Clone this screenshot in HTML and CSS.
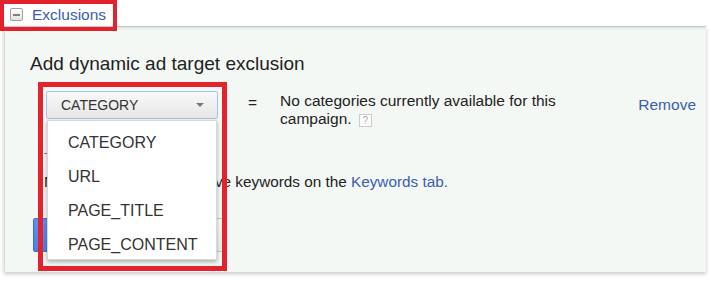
FILE: index.html
```html
<!DOCTYPE html>
<html lang="en">
<head>
  <meta charset="UTF-8">
  <meta name="viewport" content="width=device-width, initial-scale=1.0">
  <title>Exclusions</title>
  <link rel="stylesheet" href="styles.css">
</head>
<body>

  <div class="section-head">
    <span class="toggle-icon"><span class="toggle-bar"></span></span>
    <a class="section-link" href="#">Exclusions</a>
  </div>

  <div class="panel">
    <h2>Add dynamic ad target exclusion</h2>

    <div class="rule-row">
      <div class="select-wrap">
        <div class="select-btn">
          <span>CATEGORY</span>
          <span class="arrow"></span>
        </div>
        <ul class="select-menu">
          <li>CATEGORY</li>
          <li>URL</li>
          <li>PAGE_TITLE</li>
          <li>PAGE_CONTENT</li>
        </ul>
      </div>
      <span class="equals">=</span>
      <p class="rule-value">No categories currently available for this campaign. <span class="help">?</span></p>
      <a class="remove" href="#">Remove</a>
    </div>

    <a class="add-link" href="#">&ndash;</a>

    <p class="note">Note: You can add negative keywords on the <a href="#">Keywords tab.</a></p>

    <div class="actions">
      <button class="btn-save">Save</button>
      <button class="btn-cancel">Cancel</button>
    </div>
  </div>

  <!-- annotation boxes -->
  <div class="mark mark-head"></div>
  <div class="mark mark-menu"></div>

</body>
</html>
```

FILE: styles.css
```css
* {
  box-sizing: border-box;
  margin: 0;
  padding: 0;
}

body {
  position: relative;
  background-color: #fff;
  color: #222;
  font-family: "Liberation Sans", Arial, sans-serif;
  width: 709px;
  height: 285px;
  overflow: hidden;
}

a {
  color: #3a5db5;
  text-decoration: none;
}

.section-head {
  display: flex;
  align-items: center;
  height: 26px;
  padding-left: 10px;
  padding-top: 3px;
}

.toggle-icon {
  display: flex;
  align-items: center;
  justify-content: center;
  width: 13px;
  height: 13px;
  border: 1px solid #a0a0a0;
  border-radius: 2px;
  background: linear-gradient(#fdfdfd, #e2e2e2);
}

.toggle-bar {
  width: 7px;
  height: 2px;
  background-color: #808080;
}

.section-link {
  margin-left: 9px;
  font-size: 15.5px;
  color: #3c5cb8;
}

.panel {
  margin: 0 3px 0 4px;
  height: 246px;
  padding: 26px 10px 0 25px;
  background-color: #f4f8f4;
  border-top: 1px solid #c6c8c6;
  border-left: 1px solid #dcdedc;
  box-shadow: inset 0 3px 3px -2px rgba(0, 0, 0, 0.12), 0 2px 4px rgba(0, 0, 0, 0.22);
}

.panel h2 {
  font-size: 19px;
  font-weight: normal;
  line-height: 22px;
  color: #222;
}

.rule-row {
  display: flex;
  align-items: flex-start;
  margin-top: 16px;
  font-size: 15.5px;
}

.select-wrap {
  position: relative;
  margin-left: 16px;
}

.select-btn {
  display: flex;
  align-items: center;
  justify-content: space-between;
  width: 172px;
  height: 28px;
  padding: 0 13px 0 14px;
  font-size: 14px;
  color: #333;
  border: 1px solid #a8bfe6;
  border-radius: 2px;
  background: linear-gradient(#f9f9f9, #e6e6e6);
}

.arrow {
  width: 0;
  height: 0;
  border-left: 4px solid transparent;
  border-right: 4px solid transparent;
  border-top: 4px solid #777;
}

.select-menu {
  position: absolute;
  top: 29px;
  left: 1px;
  z-index: 2;
  width: 170px;
  height: 140px;
  padding-top: 5px;
  list-style: none;
  background-color: #fff;
  border: 1px solid #d8d8d8;
  box-shadow: 0 2px 4px rgba(0, 0, 0, 0.3);
}

.select-menu li {
  height: 34px;
  line-height: 34px;
  padding-left: 20px;
  font-size: 16px;
  color: #333;
}

.equals {
  margin: 3px 0 0 30px;
  line-height: 18px;
}

.rule-value {
  width: 300px;
  margin: 1px 0 0 23px;
  line-height: 18px;
}

.help {
  display: inline-block;
  width: 13px;
  height: 13px;
  margin-left: 3px;
  font-size: 10px;
  line-height: 11px;
  text-align: center;
  color: #aaa;
  border: 1px solid #ccc;
  background-color: #fff;
  vertical-align: 0;
}

.remove {
  margin: 5px 0 0 auto;
  font-size: 15.5px;
  line-height: 18px;
}

.add-link {
  display: block;
  width: 4px;
  margin: 20px 0 0 14px;
  font-size: 10px;
  line-height: 10px;
  overflow: hidden;
}

.note {
  margin: 15px 0 0 14px;
  font-size: 15.3px;
  line-height: 18px;
}

.actions {
  display: flex;
  gap: 8px;
  margin: 27px 0 0 3px;
}

.actions button {
  height: 34px;
  font-family: inherit;
  font-size: 13px;
  border-radius: 2px;
}

.btn-save {
  width: 64px;
  color: #fff;
  border: 1px solid #3c6fd8;
  background: linear-gradient(#5b8ff0, #4a7fe4);
}

.btn-cancel {
  width: 120px;
  color: #444;
  border: 1px solid #c8c8c8;
  background: linear-gradient(#f8f8f8, #ececec);
}

.mark {
  position: absolute;
  z-index: 3;
  border: 4px solid #e3222c;
}

.mark-head {
  top: 0;
  left: 0;
  width: 117px;
  height: 31px;
}

.mark-menu {
  top: 82px;
  left: 38px;
  width: 189px;
  height: 189px;
  border-width: 5px;
}
```
